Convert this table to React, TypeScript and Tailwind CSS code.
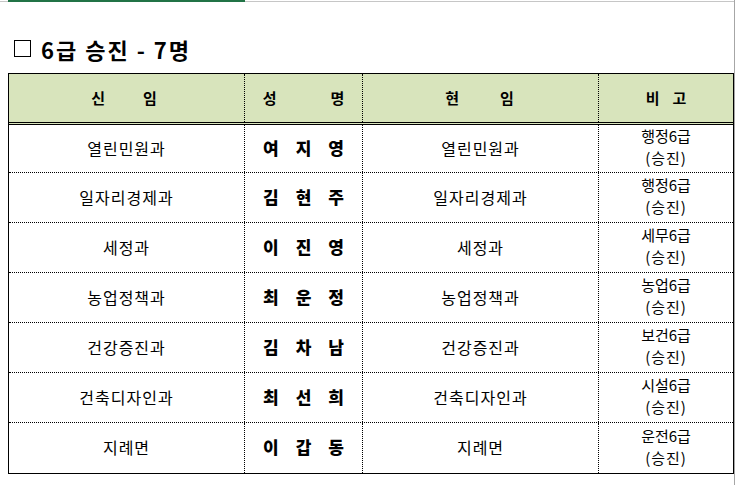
const FONT = { fontFamily: '"Noto Sans CJK KR", "Noto Sans", sans-serif' };

type Row = {
  newPost: string;
  name: string[];
  currentPost: string;
  note: string;
};

const ROWS: Row[] = [
  { newPost: "열린민원과", name: ["여", "지", "영"], currentPost: "열린민원과", note: "행정6급" },
  { newPost: "일자리경제과", name: ["김", "현", "주"], currentPost: "일자리경제과", note: "행정6급" },
  { newPost: "세정과", name: ["이", "진", "영"], currentPost: "세정과", note: "세무6급" },
  { newPost: "농업정책과", name: ["최", "운", "정"], currentPost: "농업정책과", note: "농업6급" },
  { newPost: "건강증진과", name: ["김", "차", "남"], currentPost: "건강증진과", note: "보건6급" },
  { newPost: "건축디자인과", name: ["최", "선", "희"], currentPost: "건축디자인과", note: "시설6급" },
  { newPost: "지례면", name: ["이", "갑", "동"], currentPost: "지례면", note: "운전6급" },
];

const Spaced = ({ chars, gap }: { chars: string[]; gap: string }) => (
  <div className={`flex items-center justify-center ${gap}`}>
    {chars.map((c, i) => (
      <span key={i}>{c}</span>
    ))}
  </div>
);

export default function App() {
  return (
    <div className="flex h-[485px] w-[746px] overflow-hidden bg-white text-black" style={FONT}>
      <div className="flex w-[735px] flex-col border-r border-[#a6a6a6]">
        {/* sheet top edge */}
        <div className="flex h-[2px] border-b border-[#c6c6c6]">
          <div className="w-[8px]" />
          <div className="h-[2px] w-[237px] bg-[#217346]" />
        </div>

        {/* title */}
        <div className="flex h-[71px] items-center pl-[14px] pt-[22px] text-[22px] font-bold leading-none">
          <span className="mr-[10px] inline-block h-[17px] w-[17px] border-[1.5px] border-black" />
          <span className="tracking-[2px]">6급 승진 - 7명</span>
        </div>

        {/* table */}
        <div className="ml-[8px] w-[726px] border border-black">
          <div className="grid h-[51px] grid-cols-[236px_118px_236px_1fr] border-b-[3px] border-double border-black bg-[#d8e4bc] text-[15px] font-semibold">
            <div className="flex items-center justify-center border-r border-dotted border-black pr-[5px]">
              <Spaced chars={["신", "임"]} gap="gap-[38px]" />
            </div>
            <div className="flex items-center justify-center border-r border-dotted border-black">
              <Spaced chars={["성", "명"]} gap="gap-[54px]" />
            </div>
            <div className="flex items-center justify-center border-r border-dotted border-black pr-[2px]">
              <Spaced chars={["현", "임"]} gap="gap-[41px]" />
            </div>
            <div className="flex items-center justify-center">
              <Spaced chars={["비", "고"]} gap="gap-[13px]" />
            </div>
          </div>

          {ROWS.map((row, i) => (
            <div
              key={i}
              className={`grid grid-cols-[236px_118px_236px_1fr] ${
                i === 0 ? "h-[48px]" : "h-[50px]"
              } ${i < ROWS.length - 1 ? "border-b border-dotted border-black" : ""}`}
            >
              <div className="flex items-center justify-center border-r border-dotted border-black pb-[2px] text-[16px] tracking-[1px]">
                {row.newPost}
              </div>
              <div className="flex items-center justify-center border-r border-dotted border-black pb-[2px] text-[17px] font-black">
                <Spaced chars={row.name} gap="gap-[17px]" />
              </div>
              <div className="flex items-center justify-center border-r border-dotted border-black pb-[2px] text-[16px] tracking-[1px]">
                {row.currentPost}
              </div>
              <div className="flex min-h-0 flex-col items-center justify-center pb-[3px] text-[15px] leading-[22px]">
                <span>{row.note}</span>
                <span className="tracking-[1px]">(승진)</span>
              </div>
            </div>
          ))}
        </div>
      </div>
    </div>
  );
}
